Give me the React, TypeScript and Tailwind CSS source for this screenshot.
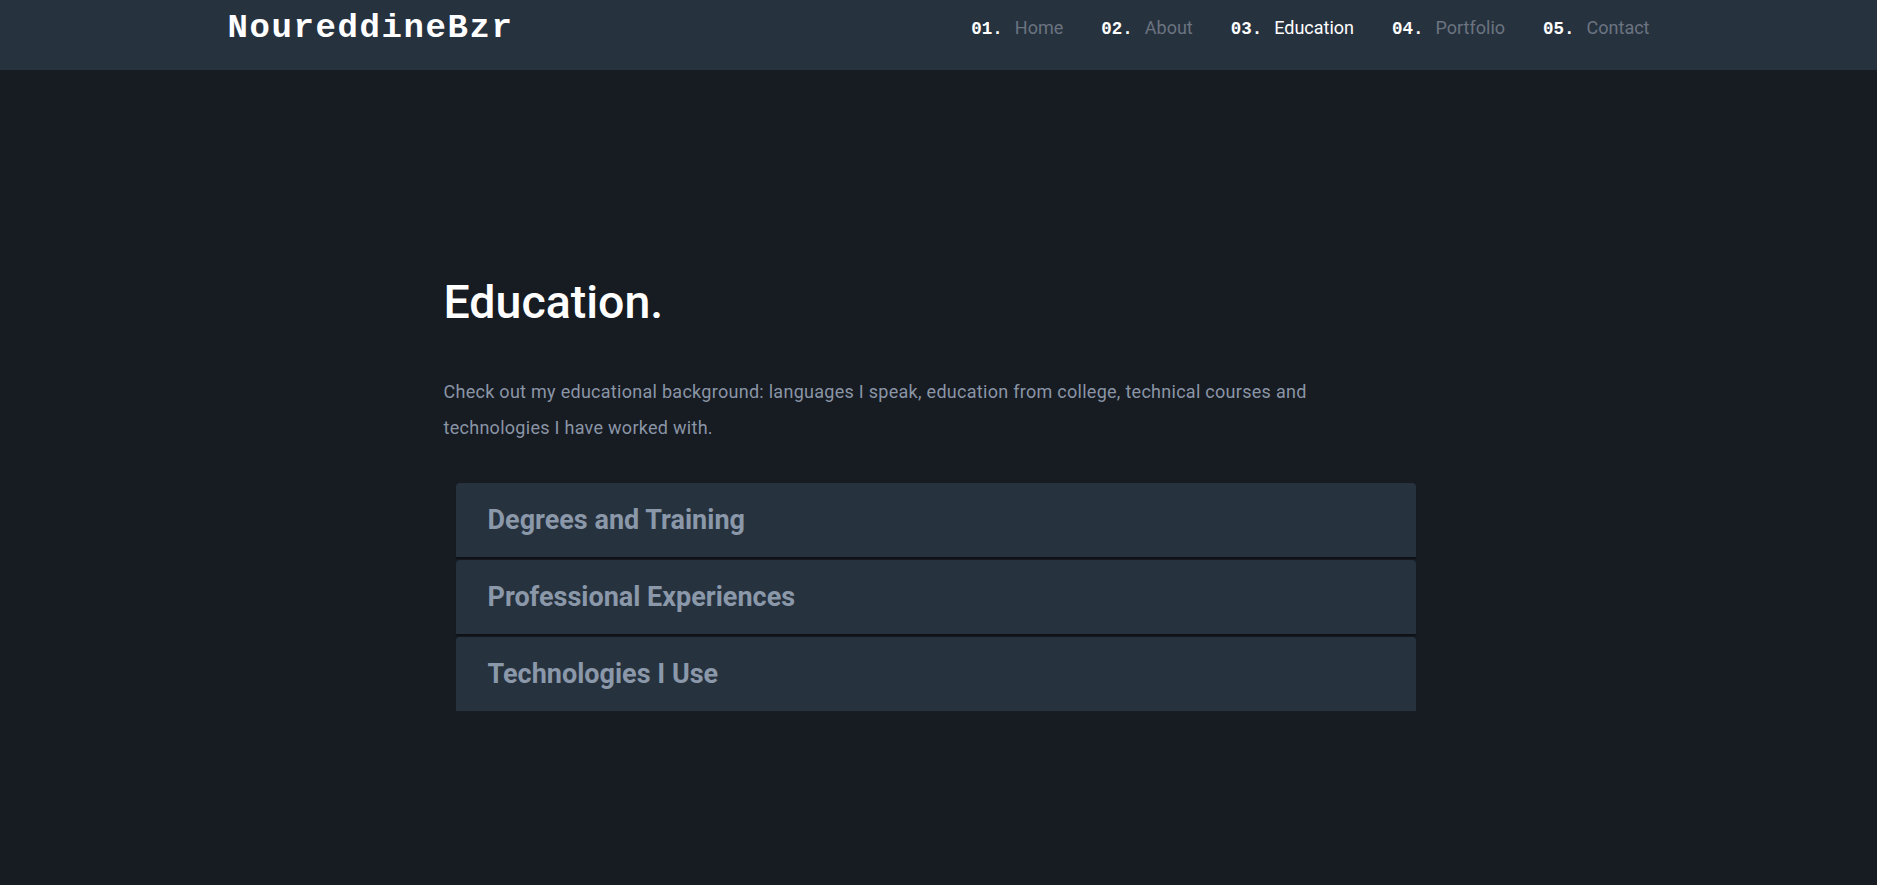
const navItems = [
  { num: "01.", label: "Home", active: false },
  { num: "02.", label: "About", active: false },
  { num: "03.", label: "Education", active: true },
  { num: "04.", label: "Portfolio", active: false },
  { num: "05.", label: "Contact", active: false },
];

const sections = ["Degrees and Training", "Professional Experiences", "Technologies I Use"];

export default function App() {
  return (
    <div className="min-h-screen bg-[#171b22] font-['Roboto','Liberation_Sans',sans-serif] text-white">
      <header className="h-[70px] w-full bg-[#27323f]">
        <div className="mx-auto flex h-[56px] w-[1422px] items-center justify-between">
          <span className="font-['Courier_New','Liberation_Mono',monospace] text-[34px] font-bold tracking-[1.6px] text-white">
            NoureddineBzr
          </span>
          <nav className="flex items-center gap-[38px]">
            {navItems.map((item) => (
              <a key={item.num} href="#" className="flex items-baseline">
                <span className="font-['Liberation_Mono',monospace] text-[17.5px] font-bold text-white">
                  {item.num}
                </span>
                <span
                  className={`ml-[12px] text-[18px] ${
                    item.active ? "text-white" : "text-[#6b7480]"
                  }`}
                >
                  {item.label}
                </span>
              </a>
            ))}
          </nav>
        </div>
      </header>

      <main className="mx-auto w-[990px] pt-[205px] pb-[120px]">
        <h1 className="text-[46.5px] font-medium leading-[54px] text-white">Education.</h1>
        <p className="mt-[45px] max-w-[920px] text-[18px] leading-[36px] tracking-[0.28px] text-[#8a95a6]">
          Check out my educational background: languages I speak, education from college, technical
          courses and technologies I have worked with.
        </p>

        <div className="ml-[12px] mt-[37px] flex w-[960px] flex-col gap-[3px]">
          {sections.map((title, i) => (
            <button
              key={title}
              type="button"
              className={`flex h-[74px] items-center rounded-t-[4px] bg-[#27323f] px-[32px] text-left ${
                i < sections.length - 1 ? "shadow-[0_2px_1px_rgba(0,0,0,0.35)]" : ""
              }`}
            >
              <span className="text-[27px] font-bold text-[#8a98a9]">{title}</span>
            </button>
          ))}
        </div>
      </main>
    </div>
  );
}
